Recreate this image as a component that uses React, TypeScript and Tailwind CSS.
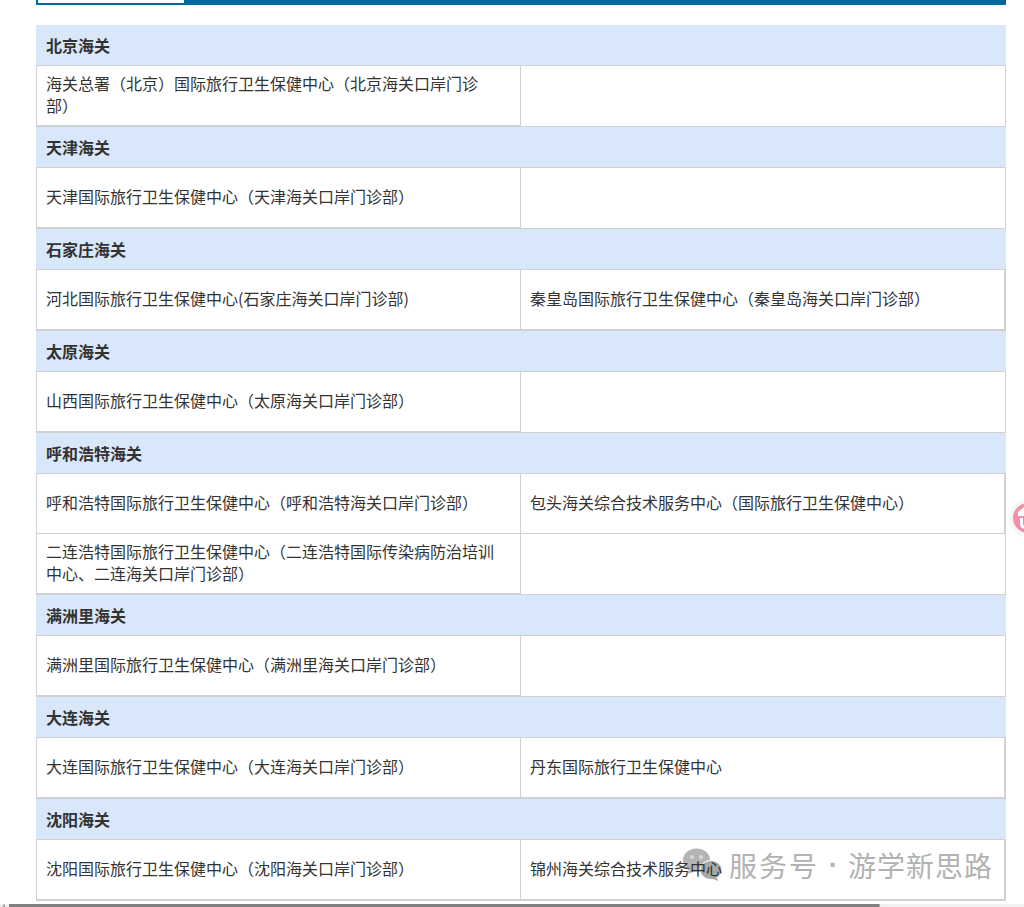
const sections: { name: string; rows: [string, string?][] }[] = [
  { name: "北京海关", rows: [["海关总署（北京）国际旅行卫生保健中心（北京海关口岸门诊部）"]] },
  { name: "天津海关", rows: [["天津国际旅行卫生保健中心（天津海关口岸门诊部）"]] },
  { name: "石家庄海关", rows: [["河北国际旅行卫生保健中心(石家庄海关口岸门诊部)", "秦皇岛国际旅行卫生保健中心（秦皇岛海关口岸门诊部）"]] },
  { name: "太原海关", rows: [["山西国际旅行卫生保健中心（太原海关口岸门诊部）"]] },
  {
    name: "呼和浩特海关",
    rows: [
      ["呼和浩特国际旅行卫生保健中心（呼和浩特海关口岸门诊部）", "包头海关综合技术服务中心（国际旅行卫生保健中心）"],
      ["二连浩特国际旅行卫生保健中心（二连浩特国际传染病防治培训中心、二连海关口岸门诊部）"],
    ],
  },
  { name: "满洲里海关", rows: [["满洲里国际旅行卫生保健中心（满洲里海关口岸门诊部）"]] },
  { name: "大连海关", rows: [["大连国际旅行卫生保健中心（大连海关口岸门诊部）", "丹东国际旅行卫生保健中心"]] },
  { name: "沈阳海关", rows: [["沈阳国际旅行卫生保健中心（沈阳海关口岸门诊部）", "锦州海关综合技术服务中心"]] },
];

export default function App() {
  return (
    <div className="relative h-[907px] w-[1024px] overflow-hidden bg-white font-['Noto_Sans_CJK_SC','Liberation_Sans',sans-serif] text-[16px] leading-[22px] text-[#333]">
      <div className="ml-9 h-[5px] w-[970px] bg-[#00689d] pl-0.5">
        <div className="h-[3px] w-[146px] bg-white" />
      </div>
      <div className="ml-9 mt-5 w-[970px]">
        {sections.map((s) => (
          <div key={s.name}>
            <div className="flex h-[41px] items-center border-b border-[#d0d0d0] bg-[#d9e7fa] pl-[10px] font-bold">{s.name}</div>
            {s.rows.map((r, i) => {
              const last = i === s.rows.length - 1;
              return (
                <div key={i} className={`flex w-[970px] ${last ? "h-[61px]" : "h-[60px]"}`}>
                  <div className={`flex w-[485px] items-center border-l border-r border-[#d0d0d0] pb-[3px] pl-[9px] pr-[20px] ${last ? "border-b-2" : "border-b"}`}>
                    <span className="relative z-10">{r[0]}</span>
                  </div>
                  <div className={`flex flex-1 items-center border-[#d0d0d0] pb-[3px] pl-[9px] pr-[20px] ${r[1] ? "border-r-2" : "border-r"} ${r[1] && last ? "border-b-2" : "border-b"}`}>
                    <span className="relative z-10">{r[1]}</span>
                  </div>
                </div>
              );
            })}
          </div>
        ))}
      </div>
      <div className="absolute left-[683px] top-[848px] flex items-center text-[28px] leading-[34px] text-[#b2b2b2]">
        <svg width="41" height="34" viewBox="0 0 41 34" className="mr-[5px] shrink-0">
          <ellipse cx="13.5" cy="12" rx="13.5" ry="11.5" fill="#b4b4b4" />
          <path d="M6 19l-1 7 7-3.5z" fill="#b4b4b4" />
          <circle cx="9" cy="9" r="2" fill="#d8d8d8" />
          <circle cx="18" cy="9" r="2" fill="#d8d8d8" />
          <ellipse cx="28" cy="22" rx="11" ry="9.5" fill="#a8a8a8" stroke="#fff" />
          <path d="M33 29l2.5 4-7-2.5z" fill="#a8a8a8" />
        </svg>
        <span className="tracking-[2px]">服务号</span>
        <span className="pl-px font-['Liberation_Sans'] font-bold tracking-[1px] whitespace-pre"> · </span>
        <span className="tracking-[1px]">游学新思路</span>
      </div>
      <svg width="30" height="30" viewBox="0 0 30 30" className="absolute left-[1013px] top-[503px] overflow-visible">
        <circle cx="15" cy="15" r="19" fill="#f7f7f7" />
        <circle cx="15" cy="15" r="15" fill="#f390a8" />
        <path d="M11 4l7 5v4H5V9z" fill="#fff" />
        <path d="M7 15v6a5 5 0 0 0 10 0h-3a2 2 0 0 1-4 0v-6z" fill="#fff" />
      </svg>
      <div className="absolute bottom-0 left-0 flex h-[3px] w-full items-center bg-[#f1f1f1]">
        <div className="ml-0.5 mr-1 h-0 w-0 border-y-[2px] border-r-[3px] border-y-transparent border-r-[#a0a0a0]" />
        <div className="h-[3px] w-[871px] rounded-r bg-[#808080]" />
      </div>
    </div>
  );
}
